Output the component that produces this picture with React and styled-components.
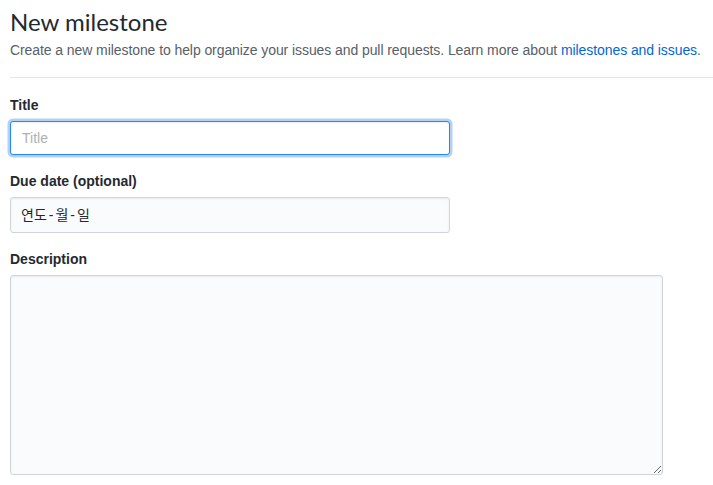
import React from "react";
import styled, { createGlobalStyle } from "styled-components";

const GlobalStyle = createGlobalStyle`
  body {
    margin: 0;
    background: #fff;
    color: #24292e;
    font-family: "Liberation Sans", "Noto Sans CJK KR", sans-serif;
    font-size: 14px;
    line-height: 1.5;
  }
`;

const Page = styled.div`
  padding: 4px 0 0 10px;
`;

const Subhead = styled.div`
  padding-bottom: 16px;
  margin-bottom: 17px;
  border-bottom: 1px solid #e1e4e8;
`;

const Heading = styled.h2`
  margin: 0;
  font-family: Lato, "Liberation Sans", sans-serif;
  font-size: 24px;
  font-weight: 400;
  line-height: 1.5;
`;

const Description = styled.p`
  margin: 0;
  color: #586069;
  font-size: 14px;
  letter-spacing: -0.08px;
`;

const Link = styled.a`
  color: #0366d6;
  text-decoration: none;
`;

const Group = styled.div`
  margin: 0 0 16px;
`;

const Label = styled.label`
  display: block;
  margin-bottom: 6px;
  font-weight: 600;
  line-height: 20px;
`;

const Input = styled.input`
  box-sizing: border-box;
  display: block;
  width: 440px;
  height: 34px;
  padding: 6px 11px;
  font: inherit;
  font-size: 14px;
  line-height: 20px;
  color: #24292e;
  background: #fafbfc;
  border: 1px solid #d1d5da;
  border-radius: 3px;
  box-shadow: inset 0 1px 2px rgba(27, 31, 35, 0.075);
  outline: none;

  &::placeholder {
    color: #acb1b6;
  }

  &:focus {
    background: #fff;
    border-color: #2188ff;
    box-shadow: inset 0 1px 2px rgba(27, 31, 35, 0.075),
      0 0 0 2.5px rgba(3, 102, 214, 0.3);
  }
`;

const DateBox = styled.div`
  box-sizing: border-box;
  display: flex;
  align-items: center;
  gap: 2px;
  width: 440px;
  height: 36px;
  padding: 6px 10px;
  background: #fafbfc;
  border: 1px solid #d1d5da;
  border-radius: 3px;
  box-shadow: inset 0 1px 2px rgba(27, 31, 35, 0.075);
`;

const TextArea = styled.textarea`
  box-sizing: border-box;
  display: block;
  width: 653px;
  height: 200px;
  padding: 8px;
  font: inherit;
  background: #fafbfc;
  border: 1px solid #d1d5da;
  border-radius: 3px;
  box-shadow: inset 0 1px 2px rgba(27, 31, 35, 0.075);
  outline: none;
`;

export default function App() {
  return (
    <>
      <GlobalStyle />
      <Page>
        <Subhead>
          <Heading>New milestone</Heading>
          <Description>
            Create a new milestone to help organize your issues and pull
            requests. Learn more about{" "}
            <Link href="#">milestones and issues</Link>.
          </Description>
        </Subhead>
        <Group>
          <Label htmlFor="title">Title</Label>
          <Input id="title" placeholder="Title" autoFocus />
        </Group>
        <Group>
          <Label>Due date (optional)</Label>
          <DateBox>
            <span>연도</span>-<span>월</span>-<span>일</span>
          </DateBox>
        </Group>
        <Group>
          <Label htmlFor="desc">Description</Label>
          <TextArea id="desc" />
        </Group>
      </Page>
    </>
  );
}
